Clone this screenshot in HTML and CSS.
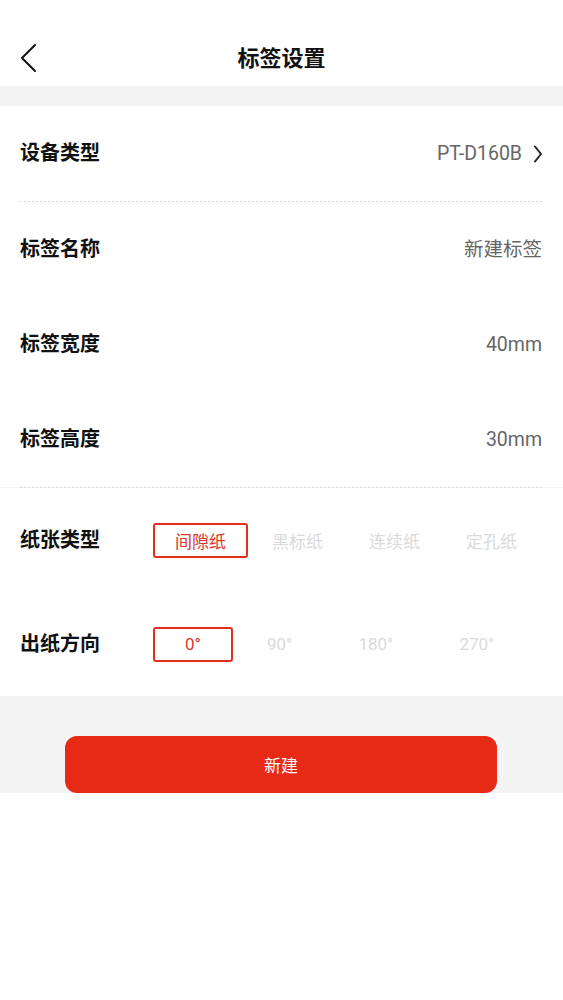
FILE: index.html
```html
<!DOCTYPE html>
<html lang="zh-CN">
<head>
<meta charset="utf-8">
<title>标签设置</title>
<link rel="stylesheet" href="styles.css">
</head>
<body>
<div class="page">
  <header class="header">
    <div class="back">
      <svg width="18" height="30" viewBox="0 0 18 30"><path d="M16 2 L3 15 L16 28" fill="none" stroke="#111" stroke-width="2" stroke-linecap="round" stroke-linejoin="round"/></svg>
    </div>
    <h1 class="title">标签设置</h1>
  </header>
  <div class="band"></div>
  <section class="list">
    <div class="row">
      <span class="label">设备类型</span>
      <span class="value">PT-D160B
        <svg class="arrow" width="10" height="18" viewBox="0 0 10 18"><path d="M2 1.5 L8 9 L2 16.5" fill="none" stroke="#222" stroke-width="2" stroke-linecap="round" stroke-linejoin="round"/></svg>
      </span>
    </div>
    <div class="dots"></div>
    <div class="row">
      <span class="label">标签名称</span>
      <span class="value">新建标签</span>
    </div>
    <div class="row">
      <span class="label">标签宽度</span>
      <span class="value">40mm</span>
    </div>
    <div class="row">
      <span class="label">标签高度</span>
      <span class="value">30mm</span>
    </div>
    <div class="split"><div class="dots-inner"></div></div>
    <div class="row row-opt">
      <span class="label label-opt">纸张类型</span>
      <div class="options">
        <span class="opt opt-wide active">间隙纸</span>
        <span class="opt opt-wide">黑标纸</span>
        <span class="opt opt-wide">连续纸</span>
        <span class="opt opt-wide">定孔纸</span>
      </div>
    </div>
    <div class="row row-opt">
      <span class="label label-opt">出纸方向</span>
      <div class="options">
        <span class="opt opt-deg active">0°</span>
        <span class="opt opt-deg">90°</span>
        <span class="opt opt-deg">180°</span>
        <span class="opt opt-deg">270°</span>
      </div>
    </div>
  </section>
  <div class="footer">
    <button class="btn">新建</button>
  </div>
</div>
</body>
</html>
```

FILE: styles.css
```css
* { box-sizing: border-box; }
html, body { margin: 0; padding: 0; background: #fff; }
body {
  font-family: Roboto, "Noto Sans CJK SC", sans-serif;
  color: #111;
}
.page { width: 563px; }
.header {
  height: 86px;
  padding-top: 30px;
  display: grid;
  grid-template-columns: 1fr;
  align-items: center;
}
.back {
  grid-area: 1 / 1;
  height: 56px;
  display: flex;
  align-items: center;
  padding-left: 19px;
}
.back svg { display: block; }
.title {
  grid-area: 1 / 1;
  margin: 0;
  padding-bottom: 4px;
  text-align: center;
  font-family: "Noto Sans CJK SC", sans-serif;
  font-size: 22px;
  font-weight: 700;
  line-height: 52px;
  color: #111;
}
.band { height: 20px; background: #f4f4f4; }
.list { background: #fff; }
.row {
  height: 95px;
  display: flex;
  align-items: center;
  justify-content: space-between;
  padding: 0 21px 0 20px;
}
.label {
  font-family: "Noto Sans CJK SC", sans-serif;
  font-size: 20px;
  font-weight: 700;
  line-height: 28px;
  padding-bottom: 3px;
  color: #111;
}
.value {
  display: flex;
  align-items: center;
  font-size: 19.5px;
  line-height: 28px;
  color: #666;
}
.arrow { display: block; margin-left: 11px; margin-right: -1px; }
.dots {
  height: 1px;
  margin: 0 21px 0 20px;
  background-image: repeating-linear-gradient(to right, #d4d4d4 0 2px, transparent 2px 4px);
}
.split {
  height: 1px;
  background: #f3f3f3;
  padding: 0 21px 0 20px;
}
.dots-inner {
  height: 1px;
  background-image: repeating-linear-gradient(to right, #dcdcdc 0 2px, transparent 2px 4px);
}
.row-opt {
  height: 104px;
  justify-content: flex-start;
}
.label-opt { width: 133px; flex: none; }
.options { display: flex; gap: 2px; }
.opt {
  height: 35px;
  display: flex;
  align-items: center;
  justify-content: center;
  border: 2px solid transparent;
  border-radius: 3px;
  font-size: 17px;
  color: #dadada;
}
.opt-wide { padding: 0 20px; }
.opt-deg { padding: 0 30px; }
.opt.active {
  border-color: #e2301e;
  color: #e0362a;
}
.footer {
  background: #f4f4f4;
  padding: 40px 66px 0 65px;
}
.btn {
  display: block;
  width: 100%;
  height: 57px;
  border: none;
  border-radius: 12px;
  background: #e72a16;
  color: #fff;
  font-family: "Noto Sans CJK SC", sans-serif;
  font-size: 17px;
  padding: 0;
}
```
